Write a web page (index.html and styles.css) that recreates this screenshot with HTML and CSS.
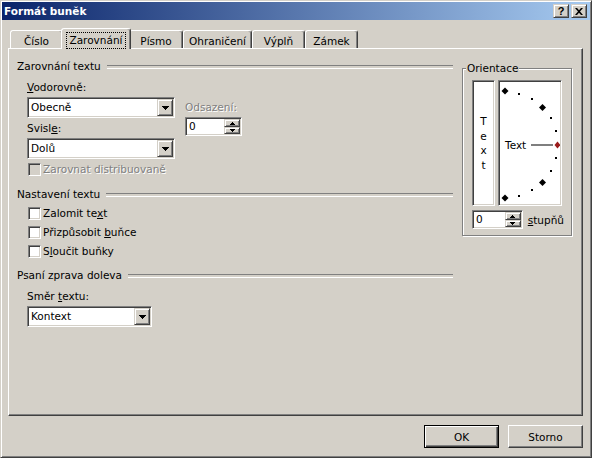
FILE: index.html
```html
<!DOCTYPE html>
<html lang="cs">
<head>
<meta charset="utf-8">
<title>Formát buněk</title>
<link rel="stylesheet" href="styles.css">
</head>
<body>
<div class="window">
  <div class="titlebar">
    <span class="title">Formát buněk</span>
    <div class="caption-buttons">
      <span class="cap-btn help">?</span>
      <span class="cap-btn close">
        <svg width="8" height="7" viewBox="0 0 8 7"><path d="M0 0h2l2 2.3 2-2.3h2l-3 3.5 3 3.5h-2l-2-2.3-2 2.3h-2l3-3.5z" fill="#000"/></svg>
      </span>
    </div>
  </div>

  <div class="tabs">
    <div class="tab tab-cislo">Číslo</div>
    <div class="tab tab-zarovnani active"><span class="focus">Zarovnání</span></div>
    <div class="tab tab-pismo">Písmo</div>
    <div class="tab tab-ohraniceni">Ohraničení</div>
    <div class="tab tab-vypln">Výplň</div>
    <div class="tab tab-zamek">Zámek</div>
  </div>

  <div class="panel">
    <div class="left">
      <div class="group-title"><span>Zarovnání textu</span></div>
      <div class="align-row">
        <div class="align-col">
          <div class="label first"><u>V</u>odorovně:</div>
          <div class="combo combo-wide"><span class="val">Obecně</span><span class="drop"><span class="arrow-down"></span></span></div>
          <div class="label">Svisl<u>e</u>:</div>
          <div class="combo combo-wide"><span class="val">Dolů</span><span class="drop"><span class="arrow-down"></span></span></div>
        </div>
        <div class="indent-col">
          <div class="label disabled">Odsazení:</div>
          <div class="spin spin-indent">
            <span class="val">0</span>
            <span class="spin-btns"><span class="spin-up"><span class="arrow-up"></span></span><span class="spin-down"><span class="arrow-small-down"></span></span></span>
          </div>
        </div>
      </div>
      <div class="check disabled distrib"><span class="box"></span><span class="check-text">Zarovnat distribuovaně</span></div>

      <div class="group-title second"><span>Nastavení textu</span></div>
      <div class="check first-check"><span class="box"></span><span class="check-text">Zalomit te<u>x</u>t</span></div>
      <div class="check"><span class="box"></span><span class="check-text">Přizpůsobit <u>b</u>uňce</span></div>
      <div class="check"><span class="box"></span><span class="check-text">S<u>l</u>oučit buňky</span></div>

      <div class="group-title third"><span>Psaní zprava doleva</span></div>
      <div class="indent">
        <div class="label first">Směr <u>t</u>extu:</div>
        <div class="combo combo-narrow"><span class="val">Kontext</span><span class="drop"><span class="arrow-down"></span></span></div>
      </div>
    </div>

    <fieldset class="orient">
      <legend>Orientace</legend>
      <div class="orient-boxes">
        <div class="vtext sunken"><span>T</span><span>e</span><span>x</span><span>t</span></div>
        <div class="dial sunken">
          <svg width="60" height="122" viewBox="0 0 60 122">
            <g fill="#000">
              <path d="M5 5.5l3.5 3.5-3.5 3.5-3.5-3.5z"/>
              <path d="M42.5 22l3.5 3.5-3.5 3.5-3.5-3.5z"/>
              <path d="M42.5 97l3.5 3.5-3.5 3.5-3.5-3.5z"/>
              <path d="M5 112.5l3.5 3.5-3.5 3.5-3.5-3.5z"/>
              <rect x="18" y="11" width="2" height="2"/>
              <rect x="31" y="16" width="2" height="2"/>
              <rect x="50" y="35" width="2" height="2"/>
              <rect x="55" y="48" width="2" height="2"/>
              <rect x="55" y="75" width="2" height="2"/>
              <rect x="50" y="88" width="2" height="2"/>
              <rect x="31" y="107" width="2" height="2"/>
              <rect x="18" y="113" width="2" height="2"/>
              <rect x="31" y="62.5" width="22" height="1"/>
            </g>
            <path d="M57.5 59.5l3 3.5-3 3.5-3-3.5z" fill="#9B1C1C"/>
            <text x="5" y="67" class="dial-text">Text</text>
          </svg>
        </div>
      </div>
      <div class="deg-row">
        <div class="spin spin-deg">
          <span class="val">0</span>
          <span class="spin-btns"><span class="spin-up"><span class="arrow-up"></span></span><span class="spin-down"><span class="arrow-small-down"></span></span></span>
        </div>
        <span class="deg-label"><u>s</u>tupňů</span>
      </div>
    </fieldset>
  </div>

  <div class="footer">
    <button class="btn default">OK</button>
    <button class="btn">Storno</button>
  </div>
</div>
</body>
</html>
```

FILE: styles.css
```css
* { box-sizing: border-box; }
html, body { margin: 0; padding: 0; }
body {
  width: 592px;
  height: 458px;
  background: #D4D0C8;
  font-family: "DejaVu Sans", "Liberation Sans", sans-serif;
  font-size: 10.5px;
  color: #000;
}
u { text-decoration: underline; text-underline-offset: 1px; }

.window {
  width: 592px;
  height: 458px;
  background: #D4D0C8;
  border: 1px solid;
  border-color: #D4D0C8 #404040 #404040 #D4D0C8;
  box-shadow: inset 1px 1px #fff, inset -1px -1px #808080;
  padding: 1px;
  display: flex;
  flex-direction: column;
}

/* title bar */
.titlebar {
  height: 18px;
  background: linear-gradient(to right, #0A246A, #A6CAF0);
  display: flex;
  align-items: center;
  justify-content: space-between;
  padding: 0 3px 0 2px;
}
.title {
  color: #fff;
  font-weight: bold;
  font-size: 10.5px;
  line-height: 18px;
}
.caption-buttons { display: flex; gap: 2px; }
.cap-btn {
  width: 16px;
  height: 14px;
  background: #D4D0C8;
  border: 1px solid;
  border-color: #D4D0C8 #404040 #404040 #D4D0C8;
  box-shadow: inset 1px 1px #fff, inset -1px -1px #808080;
  display: flex;
  align-items: center;
  justify-content: center;
}
.help {
  font-family: "Liberation Sans", sans-serif;
  font-weight: bold;
  font-size: 11px;
  line-height: 12px;
}

/* tabs */
.tabs {
  display: flex;
  align-items: flex-end;
  margin-top: 8px;
  padding-left: 8px;
}
.tab {
  height: 18px;
  padding-top: 4px;
  text-align: center;
  line-height: 13px;
  border: 1px solid;
  border-bottom: none;
  border-color: #fff #404040 transparent #fff;
  border-radius: 3px 3px 0 0;
  box-shadow: inset -1px 0 #808080;
  background: #D4D0C8;
}
.tab-cislo { width: 53px; }
.tab-zarovnani { width: 66px; }
.tab-pismo { width: 54px; }
.tab-ohraniceni { width: 69px; }
.tab-vypln { width: 53px; }
.tab-zamek { width: 53px; }
.tab.active {
  position: relative;
  z-index: 1;
  width: 70px;
  height: 21px;
  margin: 0 -2px -1px;
  padding-top: 3px;
}
.focus {
  display: inline-block;
  border: 1px dotted #000;
  padding: 1px 2px;
  line-height: 13px;
}

/* panel */
.panel {
  margin-left: 6px;
  width: 575px;
  height: 368px;
  border: 1px solid;
  border-color: #fff #404040 #404040 #fff;
  box-shadow: inset -1px -1px #808080;
  display: flex;
  align-items: flex-start;
  padding: 11px 0 0 8px;
}
.left { width: 436px; }

.group-title {
  display: flex;
  align-items: center;
  height: 13px;
  line-height: 13px;
  white-space: nowrap;
}
.group-title::after {
  content: "";
  flex: 1;
  margin-left: 6px;
  height: 2px;
  border-top: 1px solid #808080;
  border-bottom: 1px solid #fff;
}
.group-title.second { margin-top: 12px; }
.group-title.third { margin-top: 11px; }

.label { height: 13px; line-height: 13px; margin-top: 4px; white-space: nowrap; }
.label.first { margin-top: 8px; }
.disabled { color: #808080; text-shadow: 1px 1px #fff; }

.indent { padding-left: 10px; }

.align-row { display: flex; gap: 10px; padding-left: 10px; }
.align-col { width: 148px; }
.indent-col { padding-top: 28px; }
.indent-col .label { margin-top: 0; }

/* combo box */
.combo {
  height: 21px;
  margin-top: 3px;
  display: flex;
  align-items: center;
  background: #fff;
  border: 1px solid;
  border-color: #808080 #fff #fff #808080;
  box-shadow: inset 1px 1px #404040, inset -1px -1px #D4D0C8;
  padding: 1px;
}
.combo-wide { width: 148px; }
.combo-narrow { width: 125px; }
.combo .val { flex: 1; padding-left: 2px; line-height: 13px; }
.drop {
  width: 16px;
  height: 17px;
  background: #D4D0C8;
  border: 1px solid;
  border-color: #D4D0C8 #404040 #404040 #D4D0C8;
  box-shadow: inset 1px 1px #fff, inset -1px -1px #808080;
  display: flex;
  align-items: center;
  justify-content: center;
}
.arrow-down {
  width: 7px;
  height: 4px;
  background:
    linear-gradient(#000, #000) 0 0 / 7px 1px no-repeat,
    linear-gradient(#000, #000) 1px 1px / 5px 1px no-repeat,
    linear-gradient(#000, #000) 2px 2px / 3px 1px no-repeat,
    linear-gradient(#000, #000) 3px 3px / 1px 1px no-repeat;
}

/* spin box */
.spin {
  height: 19px;
  display: flex;
  background: #fff;
  border: 1px solid;
  border-color: #808080 #fff #fff #808080;
  box-shadow: inset 1px 1px #404040, inset -1px -1px #D4D0C8;
  padding: 1px;
}
.spin-indent { width: 57px; margin-top: 3px; }
.spin-deg { width: 56px; }
.spin .val { flex: 1; padding-left: 2px; line-height: 15px; }
.spin-btns { width: 16px; display: flex; flex-direction: column; }
.spin-up, .spin-down {
  background: #D4D0C8;
  border: 1px solid;
  border-color: #D4D0C8 #404040 #404040 #D4D0C8;
  box-shadow: inset 1px 1px #fff, inset -1px -1px #808080;
  display: flex;
  align-items: center;
  justify-content: center;
}
.spin-up { height: 8px; }
.spin-down { height: 7px; }
.arrow-up {
  width: 5px;
  height: 3px;
  background:
    linear-gradient(#000, #000) 2px 0 / 1px 1px no-repeat,
    linear-gradient(#000, #000) 1px 1px / 3px 1px no-repeat,
    linear-gradient(#000, #000) 0 2px / 5px 1px no-repeat;
}
.arrow-small-down {
  width: 5px;
  height: 3px;
  background:
    linear-gradient(#000, #000) 0 0 / 5px 1px no-repeat,
    linear-gradient(#000, #000) 1px 1px / 3px 1px no-repeat,
    linear-gradient(#000, #000) 2px 2px / 1px 1px no-repeat;
}

/* checkboxes */
.check {
  display: flex;
  align-items: center;
  gap: 2px;
  height: 13px;
  line-height: 13px;
  margin-top: 6px;
  padding-left: 11px;
  white-space: nowrap;
}
.check.distrib { margin-top: 4px; }
.check.first-check { margin-top: 6px; }
.box {
  width: 13px;
  height: 13px;
  flex: none;
  background: #fff;
  border: 1px solid;
  border-color: #808080 #fff #fff #808080;
  box-shadow: inset 1px 1px #404040, inset -1px -1px #D4D0C8;
}
.check.disabled .box { background: #D4D0C8; }

/* orientation group */
.orient {
  margin: 2px 0 0 9px;
  padding: 5px 7px 6px 9px;
  width: 110px;
  min-width: 0;
  border: 1px solid #808080;
  box-shadow: inset 1px 1px #fff, 1px 1px #fff;
}
.orient legend {
  padding: 0 1px;
  margin-left: -6px;
  background: #D4D0C8;
  line-height: 13px;
}
.orient-boxes { display: flex; gap: 3px; height: 126px; }
.sunken {
  background: #fff;
  border: 1px solid;
  border-color: #808080 #fff #fff #808080;
  box-shadow: inset 1px 1px #404040, inset -1px -1px #D4D0C8;
}
.vtext {
  width: 23px;
  display: flex;
  flex-direction: column;
  align-items: center;
  justify-content: center;
  line-height: 14.5px;
}
.dial { width: 64px; padding: 1px; }
.dial svg { display: block; }
.dial-text {
  font-family: "DejaVu Sans", "Liberation Sans", sans-serif;
  font-size: 10.5px;
}
.deg-row {
  display: flex;
  align-items: center;
  gap: 5px;
  margin-top: 4px;
}

/* footer buttons */
.footer {
  display: flex;
  justify-content: flex-end;
  gap: 9px;
  padding: 9px 7px 0 0;
}
.btn {
  width: 75px;
  height: 23px;
  padding: 0;
  font-family: "DejaVu Sans", "Liberation Sans", sans-serif;
  font-size: 10.5px;
  color: #000;
  background: #D4D0C8;
  border: 1px solid;
  border-color: #fff #404040 #404040 #fff;
  box-shadow: inset -1px -1px #808080;
}
.btn.default {
  border-color: #000;
  box-shadow: inset 1px 1px #fff, inset -1px -1px #404040, inset -2px -2px #808080;
}
```
